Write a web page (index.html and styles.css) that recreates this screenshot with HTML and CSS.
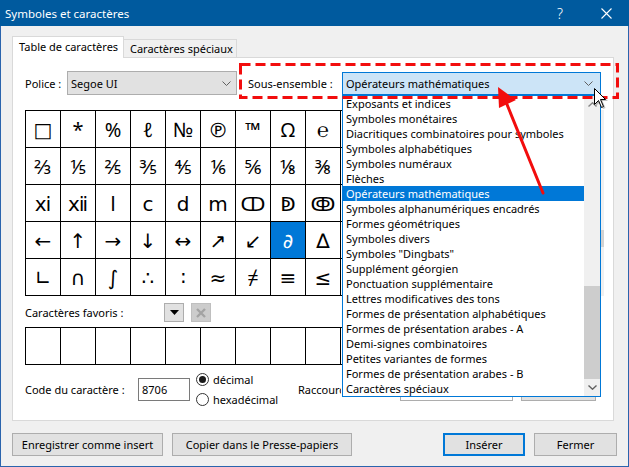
FILE: index.html
```html
<!DOCTYPE html>
<html lang="fr">
<head>
<meta charset="utf-8">
<title>Symboles et caractères</title>
<link rel="stylesheet" href="styles.css">
</head>
<body>
<div class="window">
  <div class="titlebar">
    <span class="title">Symboles et caractères</span>
    <span class="tb-btn tb-help">?</span>
    <span class="tb-btn tb-close"><svg width="11" height="11" viewBox="0 0 11 11"><path d="M0.5 0.5L10.5 10.5M10.5 0.5L0.5 10.5" stroke="#fff" stroke-width="1.1"/></svg></span>
  </div>
  <div class="client">
    <div class="tabs">
      <div class="tab tab-active">Table de caractères</div>
      <div class="tab tab-other">Caractères spéciaux</div>
    </div>
    <div class="panel">
      <div class="font-row">
        <span class="lbl-police">Police :</span>
        <div class="combo combo-font"><span class="combo-text">Segoe UI</span><svg class="chev" width="9" height="5" viewBox="0 0 9 5"><path d="M0.5 0.5L4.5 4.5L8.5 0.5" fill="none" stroke="#606060"/></svg></div>
        <span class="lbl-subset">Sous-ensemble :</span>
        <div class="combo combo-subset"><span class="combo-text">Opérateurs mathématiques</span><svg class="chev" width="9" height="5" viewBox="0 0 9 5"><path d="M0.5 0.5L4.5 4.5L8.5 0.5" fill="none" stroke="#606060"/></svg></div>
      </div>
      <div class="grid-wrap">
        <div class="char-grid">
          <div class="cell">□</div><div class="cell">*</div><div class="cell">%</div><div class="cell">ℓ</div><div class="cell">№</div><div class="cell">℗</div><div class="cell">™</div><div class="cell">Ω</div><div class="cell">℮</div><div class="cell"></div><div class="cell"></div><div class="cell"></div><div class="cell"></div><div class="cell"></div><div class="cell"></div><div class="cell"></div>
          <div class="cell">⅔</div><div class="cell">⅕</div><div class="cell">⅖</div><div class="cell">⅗</div><div class="cell">⅘</div><div class="cell">⅙</div><div class="cell">⅚</div><div class="cell">⅛</div><div class="cell">⅜</div><div class="cell"></div><div class="cell"></div><div class="cell"></div><div class="cell"></div><div class="cell"></div><div class="cell"></div><div class="cell"></div>
          <div class="cell">ⅺ</div><div class="cell">ⅻ</div><div class="cell">ⅼ</div><div class="cell">ⅽ</div><div class="cell">ⅾ</div><div class="cell">ⅿ</div><div class="cell">ↀ</div><div class="cell">ↁ</div><div class="cell">ↂ</div><div class="cell"></div><div class="cell"></div><div class="cell"></div><div class="cell"></div><div class="cell"></div><div class="cell"></div><div class="cell"></div>
          <div class="cell">←</div><div class="cell">↑</div><div class="cell">→</div><div class="cell">↓</div><div class="cell">↔</div><div class="cell">↗</div><div class="cell">↙</div><div class="cell sel">∂</div><div class="cell">∆</div><div class="cell"></div><div class="cell"></div><div class="cell"></div><div class="cell"></div><div class="cell"></div><div class="cell"></div><div class="cell"></div>
          <div class="cell">∟</div><div class="cell">∩</div><div class="cell">∫</div><div class="cell">∴</div><div class="cell">∶</div><div class="cell">≈</div><div class="cell">≠</div><div class="cell">≡</div><div class="cell">≤</div><div class="cell"></div><div class="cell"></div><div class="cell"></div><div class="cell"></div><div class="cell"></div><div class="cell"></div><div class="cell"></div>
        </div>
        <div class="grid-scroll"><div class="grid-thumb"></div></div>
      </div>
      <div class="fav-head">
        <span class="fav-label">Caractères favoris :</span>
        <div class="mini mini-drop"><svg width="9" height="5" viewBox="0 0 9 5"><path d="M0 0H9L4.5 5Z" fill="#000"/></svg></div>
        <div class="mini mini-del"><svg width="10" height="10" viewBox="0 0 10 10"><path d="M1 1L9 9M9 1L1 9" stroke="#a3a3a3" stroke-width="2.4"/></svg></div>
      </div>
      <div class="fav-grid">
        <div class="cell"></div><div class="cell"></div><div class="cell"></div><div class="cell"></div><div class="cell"></div><div class="cell"></div><div class="cell"></div><div class="cell"></div><div class="cell"></div><div class="cell"></div><div class="cell"></div><div class="cell"></div><div class="cell"></div><div class="cell"></div><div class="cell"></div><div class="cell"></div>
      </div>
      <div class="code-row">
        <span class="code-label">Code du caractère :</span>
        <div class="input code-input">8706</div>
        <div class="radios">
          <div class="radio"><span class="dot checked"></span>décimal</div>
          <div class="radio"><span class="dot"></span>hexadécimal</div>
        </div>
        <span class="short-label">Raccourci clavier :</span>
        <div class="input short-input"></div>
        <div class="short-btn"></div>
      </div>
    </div>
    <div class="buttons">
      <div class="btn btn-save">Enregistrer comme insert</div>
      <div class="btn btn-copy">Copier dans le Presse-papiers</div>
      <div class="btn btn-insert">Insérer</div>
      <div class="btn btn-close">Fermer</div>
    </div>
  </div>

  <div class="droplist">
    <div class="items">
      <div class="item">Exposants et indices</div>
      <div class="item">Symboles monétaires</div>
      <div class="item">Diacritiques combinatoires pour symboles</div>
      <div class="item">Symboles alphabétiques</div>
      <div class="item">Symboles numéraux</div>
      <div class="item">Flèches</div>
      <div class="item hl">Opérateurs mathématiques</div>
      <div class="item">Symboles alphanumériques encadrés</div>
      <div class="item">Formes géométriques</div>
      <div class="item">Symboles divers</div>
      <div class="item">Symboles "Dingbats"</div>
      <div class="item">Supplément géorgien</div>
      <div class="item">Ponctuation supplémentaire</div>
      <div class="item">Lettres modificatives des tons</div>
      <div class="item">Formes de présentation alphabétiques</div>
      <div class="item">Formes de présentation arabes - A</div>
      <div class="item">Demi-signes combinatoires</div>
      <div class="item">Petites variantes de formes</div>
      <div class="item">Formes de présentation arabes - B</div>
      <div class="item">Caractères spéciaux</div>
    </div>
    <div class="ls-scroll">
      <div class="ls-arrow"><svg width="9" height="5" viewBox="0 0 9 5"><path d="M0.5 4.5L4.5 0.8L8.5 4.5" fill="none" stroke="#858585" stroke-width="1.4"/></svg></div>
      <div class="ls-track"></div>
      <div class="ls-thumb"></div>
      <div class="ls-arrow"><svg width="9" height="5" viewBox="0 0 9 5"><path d="M0.5 0.5L4.5 4.2L8.5 0.5" fill="none" stroke="#606060" stroke-width="1.4"/></svg></div>
    </div>
  </div>

  <svg class="annot" width="629" height="467" viewBox="0 0 629 467">
    <rect x="240.5" y="64.5" width="377" height="33" fill="none" stroke="#f20d0d" stroke-width="3" stroke-dasharray="10 5"/>
    <line x1="543" y1="193" x2="506" y2="102" stroke="#f20d0d" stroke-width="3" stroke-linecap="round"/>
    <polygon points="498,87 516,100 499,108" fill="#f20d0d"/>
  </svg>

  <svg class="cursor" width="16" height="22" viewBox="0 0 16 22">
    <path d="M2 2L2 18L6 14L9 21L11.5 20L8.5 13L14 13Z" fill="#000" opacity="0.25"/>
    <path d="M0.5 0.5L0.5 16.5L4.5 12.5L7.5 19.5L9.5 18.5L6.5 11.5L11.5 11.5Z" fill="#fff" stroke="#000" stroke-width="1" stroke-linejoin="round"/>
  </svg>
</div>
</body>
</html>
```

FILE: styles.css
```css
* { box-sizing: border-box; }
html, body { margin: 0; padding: 0; }
body {
  width: 629px;
  height: 467px;
  overflow: hidden;
  font-family: "Noto Sans", "Open Sans", sans-serif;
  font-size: 11px;
  color: #000;
  background: #f0f0f0;
}
.window {
  position: relative;
  width: 629px;
  height: 467px;
  border: 1px solid #2a64ad;
  border-top: 0;
  background: #f0f0f0;
  display: flex;
  flex-direction: column;
}
.titlebar {
  flex: none;
  height: 26px;
  margin: 0 -1px;
  background: #005a9e;
  color: #fff;
  display: flex;
  align-items: center;
  padding-left: 5px;
}
.title { flex: 1; font-size: 11.5px; }
.tb-btn {
  width: 46px;
  height: 26px;
  display: flex;
  align-items: center;
  justify-content: center;
}
.tb-help { font-size: 14px; font-weight: 300; }
.client {
  flex: 1;
  display: flex;
  flex-direction: column;
  padding: 10px 11px 0 11px;
}
.tabs {
  display: flex;
  align-items: flex-end;
  height: 21px;
  position: relative;
  z-index: 1;
}
.tab {
  height: 18px;
  width: 113px;
  padding-left: 6px;
  border: 1px solid #d9d9d9;
  border-left: 0;
  border-bottom: 0;
  background: #f0f0f0;
  display: flex;
  align-items: center;
  white-space: nowrap;
}
.tab-active {
  height: 22px;
  width: 112px;
  margin-bottom: -1px;
  padding-left: 6px;
  border-left: 1px solid #d9d9d9;
  background: #fff;
  align-items: flex-start;
  padding-top: 2px;
  line-height: 16px;
}
.panel {
  width: 602px;
  height: 364px;
  border: 1px solid #d9d9d9;
  background: #fff;
  padding: 13px 9px 0 12px;
  display: flex;
  flex-direction: column;
}
.font-row {
  display: flex;
  align-items: center;
  height: 24px;
}
.lbl-police { width: 42px; }
.lbl-subset { width: 94px; margin-left: 11px; }
.combo {
  height: 24px;
  border: 1px solid #adadad;
  background: #e1e1e1;
  display: flex;
  align-items: center;
  padding-left: 3px;
}
.combo-text { flex: 1; white-space: nowrap; }
.combo-font { width: 170px; }
.combo-font .chev { margin-right: 5px; }
.combo-subset {
  width: 259px;
  height: 23px;
  align-self: flex-end;
  background: #cce4f7;
  border-color: #0078d7;
}
.combo-subset .chev { margin-right: 7px; }
.grid-wrap {
  display: flex;
  margin-top: 15px;
}
.char-grid, .fav-grid {
  display: grid;
  grid-template-columns: repeat(16, 35px);
  grid-auto-rows: 37px;
  width: 561px;
  border-left: 1px solid #000;
  border-top: 1px solid #000;
}
.cell {
  border-right: 1px solid #000;
  border-bottom: 1px solid #000;
  display: flex;
  align-items: center;
  justify-content: center;
  font-family: "Noto Sans", "DejaVu Sans", sans-serif;
  font-size: 20px;
}
.cell.sel { background: #0078d7; color: #fff; font-style: italic; }
.grid-scroll {
  width: 17px;
  height: 186px;
  margin-left: 1px;
  background: #f0f0f0;
  padding-top: 120px;
}
.grid-thumb { height: 17px; background: #d2d2d2; }
.fav-head {
  display: flex;
  align-items: center;
  height: 19px;
  margin-top: 7px;
}
.fav-label { width: 139px; }
.mini {
  width: 20px;
  height: 19px;
  border: 1px solid #adadad;
  background: #e1e1e1;
  display: flex;
  align-items: center;
  justify-content: center;
}
.mini-del {
  margin-left: 7px;
  background: #cccccc;
  border-color: #bfbfbf;
}
.fav-grid { margin-top: 5px; }
.code-row {
  display: flex;
  align-items: center;
  height: 33px;
  margin-top: 8px;
}
.code-label { width: 113px; }
.input {
  height: 23px;
  border: 1px solid #7a7a7a;
  background: #fff;
  display: flex;
  align-items: center;
  padding-left: 3px;
}
.code-input { width: 52px; }
.radios {
  width: 102px;
  margin-left: 6px;
  display: flex;
  flex-direction: column;
  gap: 7px;
}
.radio {
  height: 13px;
  display: flex;
  align-items: center;
  gap: 4px;
  white-space: nowrap;
}
.dot {
  width: 13px;
  height: 13px;
  border: 1px solid #333;
  border-radius: 50%;
  background: #fff;
  display: flex;
  align-items: center;
  justify-content: center;
  flex: none;
}
.dot.checked::after {
  content: "";
  width: 7px;
  height: 7px;
  border-radius: 50%;
  background: #1a1a1a;
}
.short-label {
  width: 43px;
  margin-right: 59px;
  white-space: nowrap;
  overflow: hidden;
}
.short-input { width: 113px; border-color: #adadad; }
.short-btn {
  width: 75px;
  height: 23px;
  margin-left: 8px;
  border: 1px solid #adadad;
  background: #e1e1e1;
}
.buttons {
  display: flex;
  height: 23px;
  margin-top: 12px;
}
.btn {
  height: 23px;
  border: 1px solid #adadad;
  background: #e1e1e1;
  display: flex;
  align-items: center;
  justify-content: center;
  white-space: nowrap;
}
.btn-save { width: 151px; }
.btn-copy { width: 180px; margin-left: 9px; }
.btn-insert { width: 82px; margin-left: auto; border: 2px solid #0078d7; }
.btn-close { width: 83px; margin-left: 9px; }

/* open drop-down list overlay */
.droplist {
  position: absolute;
  left: 341px;
  top: 95px;
  width: 259px;
  height: 302px;
  border: 1px solid #0078d7;
  background: #fff;
  display: flex;
  z-index: 5;
}
.items {
  flex: 1;
  display: flex;
  flex-direction: column;
  overflow: hidden;
}
.item {
  height: 15px;
  line-height: 15px;
  padding-left: 3px;
  white-space: nowrap;
  flex: none;
}
.item.hl { background: #0078d7; color: #fff; }
.ls-scroll {
  width: 16px;
  background: #f0f0f0;
  display: flex;
  flex-direction: column;
}
.ls-arrow {
  height: 17px;
  display: flex;
  align-items: center;
  justify-content: center;
}
.ls-track { height: 173px; }
.ls-thumb { height: 93px; background: #cdcdcd; }
.annot {
  position: absolute;
  left: -1px;
  top: 0;
  z-index: 6;
  pointer-events: none;
}
.cursor {
  position: absolute;
  left: 593px;
  top: 88px;
  z-index: 7;
}
```
